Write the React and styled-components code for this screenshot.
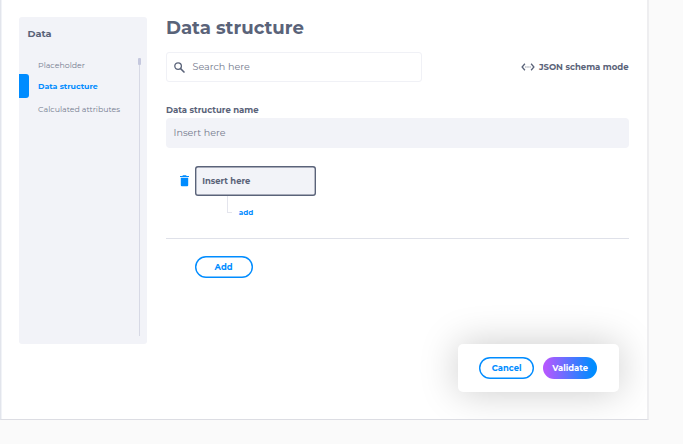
import React from "react";
import styled, { createGlobalStyle } from "styled-components";

const GlobalStyle = createGlobalStyle`
  * { box-sizing: border-box; }
  body {
    margin: 0;
    background: #fafafa;
    color: #5a6379;
    font-family: Montserrat, Inter, sans-serif;
    overflow: hidden;
  }
`;

const Window = styled.div`
  position: relative;
  display: flex;
  width: 649px;
  height: 420px;
  padding: 17px 18px 0 17.5px;
  background: #fff;
  border: solid;
  border-width: 0 2px 1px 1px;
  border-color: #fff #eeeef0 #dcdde3 #e2e5ec;
  box-shadow: inset 1px 0 #f1f3f7;
  overflow: hidden;
`;

const Text = styled.span`
  display: block;
  font-size: ${(p) => p.$size}px;
  font-weight: ${(p) => p.$weight || 400};
  line-height: 12px;
  white-space: nowrap;
`;

const Sidebar = styled.aside`
  display: flex;
  justify-content: space-between;
  width: 127.5px;
  height: 326.5px;
  margin-left: 0.5px;
  background: #f2f3f8;
  border-radius: 3px;
  padding-right: 5.5px;
`;

const Nav = styled.nav`
  display: flex;
  flex-direction: column;
  padding-top: 11px;
`;

const NavTitle = styled.div`
  padding-left: 8.5px;
  margin-bottom: 19px;
`;

const NavItem = styled.a`
  display: flex;
  align-items: center;
  height: ${(p) => p.$height}px;
  gap: 9px;
  color: ${(p) => (p.$active ? "#008cff" : "#757c90")};
  &::before {
    content: "";
    width: 10px;
    height: 24px;
    flex: none;
    border-radius: 0 3px 3px 0;
    background: ${(p) => (p.$active ? "#008cff" : "transparent")};
  }
`;

const ScrollTrack = styled.div`
  display: flex;
  justify-content: center;
  width: 3px;
  height: 278px;
  margin-top: 41px;
  background: linear-gradient(#d7d9e5, #d7d9e5) center / 1px 100% no-repeat;
`;

const ScrollThumb = styled.div`
  width: 3px;
  height: 7px;
  border-radius: 1px;
  background: #c5c8de;
`;

const Main = styled.main`
  width: 462.5px;
  margin-left: 19.5px;
`;

const Title = styled.h1`
  margin: 0;
  font-size: 18.1px;
  line-height: 22px;
  font-weight: 700;
  white-space: nowrap;
`;

const Toolbar = styled.div`
  display: flex;
  justify-content: space-between;
  align-items: center;
  height: 30px;
  margin-top: 13px;
`;

const SearchBox = styled.div`
  display: flex;
  align-items: center;
  gap: 8px;
  width: 255.5px;
  height: 30px;
  padding-left: 6.5px;
  border: 1px solid #f0f1f6;
  border-radius: 3px;
  color: #747a8d;
`;

const ModeButton = styled.div`
  display: flex;
  align-items: center;
  gap: 3.5px;
`;

const FieldLabel = styled.div`
  margin-top: 22px;
  height: 14px;
`;

const Field = styled.div`
  display: flex;
  align-items: center;
  height: 29.5px;
  padding-left: 7.5px;
  border-radius: 4px;
  background: #f2f3f8;
  color: #747a8d;
`;

const Node = styled.div`
  display: flex;
  align-items: center;
  gap: 6px;
  margin: 18px 0 0 13.8px;
`;

const NodeInput = styled.div`
  display: flex;
  align-items: center;
  width: 121px;
  height: 30.5px;
  padding-left: 7.5px;
  box-shadow: inset 0 0 0 1.4px #5a6379;
  border-radius: 3px;
  background: #f2f3f8;
`;

const ChildRow = styled.div`
  display: flex;
  height: 42px;
  margin-left: 60.8px;
  gap: 7px;
  color: #008cff;
`;

const Branch = styled.div`
  width: 5px;
  height: 17px;
  border: solid #e4e5ed;
  border-width: 0 0 1px 1px;
`;

const AddLink = styled.div`
  padding-top: 11px;
`;

const Divider = styled.div`
  height: 1px;
  margin-left: -0.5px;
  background: #dfe1e9;
`;

const Button = styled.div`
  display: flex;
  align-items: center;
  justify-content: center;
  width: ${(p) => p.$width}px;
  height: 22px;
  border-radius: 11px;
  box-shadow: ${(p) => (p.$filled ? "none" : "inset 0 0 0 1.4px #008cff")};
  color: ${(p) => (p.$filled ? "#fff" : "#008cff")};
  background: ${(p) => (p.$filled ? "linear-gradient(90deg, #b458ff 5%, #008cff 92%)" : "#fff")};
`;

const AddRow = styled.div`
  padding: 17px 0 0 28.5px;
`;

const Footer = styled.div`
  position: absolute;
  left: 457.2px;
  top: 344px;
  display: flex;
  justify-content: center;
  align-items: center;
  gap: 9px;
  width: 160.5px;
  height: 48px;
  border-radius: 5px;
  background: #fff;
  box-shadow: 0 0 38px rgba(0, 0, 0, 0.21);
`;

const SearchIcon = () => (
  <svg width="11" height="11" viewBox="0 0 11 11" fill="none" stroke="#5a6379">
    <circle cx="4.1" cy="4.1" r="3.3" strokeWidth="1.3" />
    <path d="M6.6 6.6 10.5 10.5" strokeWidth="1.5" />
  </svg>
);

const CodeIcon = () => (
  <svg width="14" height="10" viewBox="0 0 14 10" fill="none" stroke="#5a6379">
    <path d="M3.9 1.8 1.1 5 3.9 8.2M10.1 1.8 12.9 5 10.1 8.2" strokeWidth="1.3" />
    <path d="M4.4 5h1M6.5 5h1M8.6 5h1" strokeWidth="1.1" />
  </svg>
);

const TrashIcon = () => (
  <svg width="9" height="12" viewBox="0 0 9 12" fill="#008cff">
    <path d="M0 .9h2.3L3 .3h3l.7.6H9v1.2H0zM.8 2.8h7.4v7.5q0 1-1 1H1.8q-1 0-1-1z" />
  </svg>
);

export default function App() {
  return (
    <>
      <GlobalStyle />
      <Window>
        <Sidebar>
          <Nav>
            <NavTitle><Text $size={9.7} $weight={700}>Data</Text></NavTitle>
            <NavItem $height={12}><Text $size={7.85}>Placeholder</Text></NavItem>
            <NavItem $height={29} $active><Text $size={7.85} $weight={700}>Data structure</Text></NavItem>
            <NavItem $height={17}><Text $size={7.85}>Calculated attributes</Text></NavItem>
          </Nav>
          <ScrollTrack><ScrollThumb /></ScrollTrack>
        </Sidebar>
        <Main>
          <Title>Data structure</Title>
          <Toolbar>
            <SearchBox>
              <SearchIcon />
              <Text $size={9.65}>Search here</Text>
            </SearchBox>
            <ModeButton>
              <CodeIcon />
              <Text $size={8.5} $weight={700}>JSON schema mode</Text>
            </ModeButton>
          </Toolbar>
          <FieldLabel><Text $size={8.5} $weight={700}>Data structure name</Text></FieldLabel>
          <Field><Text $size={9.6}>Insert here</Text></Field>
          <Node>
            <TrashIcon />
            <NodeInput><Text $size={8.4} $weight={700}>Insert here</Text></NodeInput>
          </Node>
          <ChildRow>
            <Branch />
            <AddLink><Text $size={7.2} $weight={700}>add</Text></AddLink>
          </ChildRow>
          <Divider />
          <AddRow>
            <Button $width={58}><Text $size={8.4} $weight={700}>Add</Text></Button>
          </AddRow>
        </Main>
        <Footer>
          <Button $width={54.5}><Text $size={8.4} $weight={700}>Cancel</Text></Button>
          <Button $width={54.5} $filled><Text $size={8.4} $weight={700}>Validate</Text></Button>
        </Footer>
      </Window>
    </>
  );
}
